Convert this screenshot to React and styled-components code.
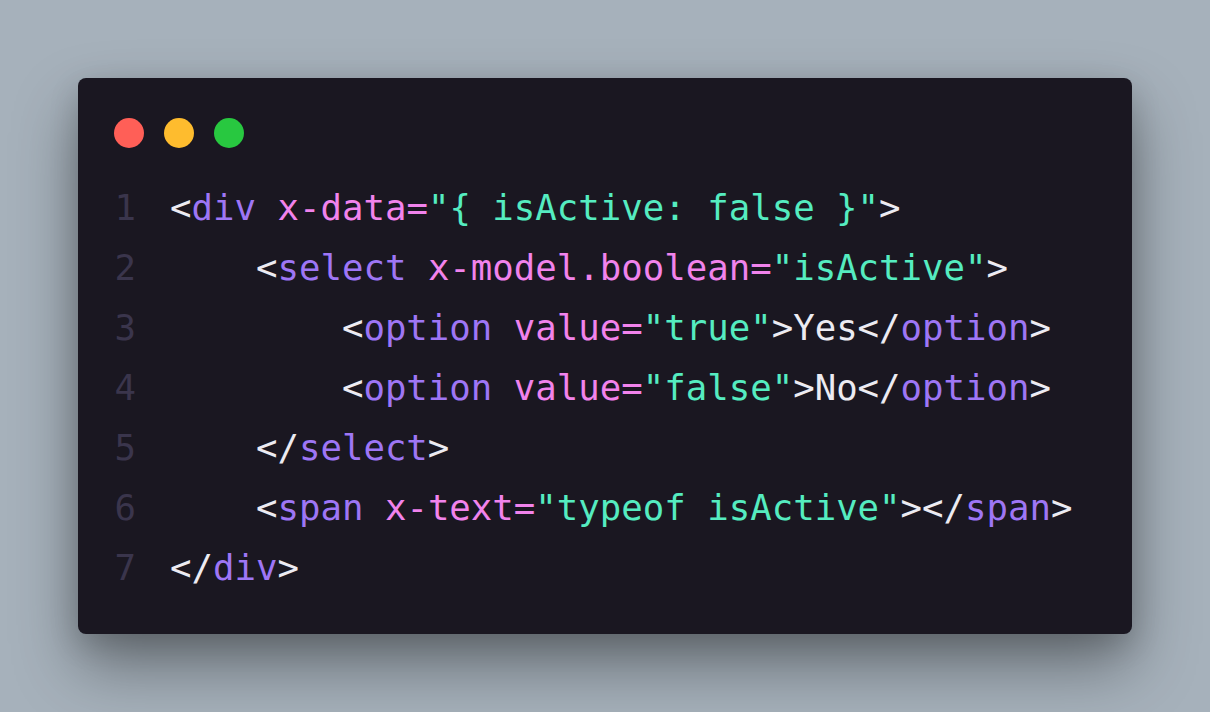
import React from "react";
import styled, { createGlobalStyle } from "styled-components";

const GlobalStyle = createGlobalStyle`
  html, body {
    margin: 0;
    padding: 0;
  }
  body {
    background: #a6b1bb;
  }
`;

const lines = [
  [["t", "<"], ["n", "div"], ["p", " "], ["a", "x-data"], ["a", "="], ["s", "\"{ isActive: false }\""], ["t", ">"]],
  [["p", "    "], ["t", "<"], ["n", "select"], ["p", " "], ["a", "x-model.boolean"], ["a", "="], ["s", "\"isActive\""], ["t", ">"]],
  [["p", "        "], ["t", "<"], ["n", "option"], ["p", " "], ["a", "value"], ["a", "="], ["s", "\"true\""], ["t", ">Yes</"], ["n", "option"], ["t", ">"]],
  [["p", "        "], ["t", "<"], ["n", "option"], ["p", " "], ["a", "value"], ["a", "="], ["s", "\"false\""], ["t", ">No</"], ["n", "option"], ["t", ">"]],
  [["p", "    "], ["t", "</"], ["n", "select"], ["t", ">"]],
  [["p", "    "], ["t", "<"], ["n", "span"], ["p", " "], ["a", "x-text"], ["a", "="], ["s", "\"typeof isActive\""], ["t", "></"], ["n", "span"], ["t", ">"]],
  [["t", "</"], ["n", "div"], ["t", ">"]],
];

const App = () => {
  return (
    <Page>
      <GlobalStyle />
      <Window>
        <Controls>
          <Dot color="#ff5f57" />
          <Dot color="#febc2e" />
          <Dot color="#28c840" />
        </Controls>
        <Code>
          {lines.map((tokens, i) => (
            <Line key={i}>
              <LineNo>{i + 1}</LineNo>
              <Text>
                {tokens.map(([kind, value], j) => (
                  <Token key={j} kind={kind}>
                    {value}
                  </Token>
                ))}
              </Text>
            </Line>
          ))}
        </Code>
      </Window>
    </Page>
  );
};

export default App;

const tokenColors = {
  t: "#ecebf2",
  n: "#9e76f5",
  a: "#f183ec",
  s: "#55ecc0",
  p: "#ecebf2",
};

const Page = styled.div`
  width: 1210px;
  height: 712px;
  display: flex;
  align-items: center;
  justify-content: center;
  background: #a6b1bb;
  overflow: hidden;
`;

const Window = styled.div`
  width: 1054px;
  height: 556px;
  box-sizing: border-box;
  background: #1a1721;
  border-radius: 8px;
  padding: 40px 36px 36px 36px;
  display: flex;
  flex-direction: column;
  box-shadow: 0 32px 64px rgba(0, 0, 0, 0.38), 0 10px 30px rgba(0, 0, 0, 0.15);
`;

const Controls = styled.div`
  display: flex;
  gap: 20px;
  height: 30px;
`;

const Dot = styled.span`
  width: 30px;
  height: 30px;
  border-radius: 50%;
  background: ${(p) => p.color};
`;

const Code = styled.div`
  margin-top: 30px;
  display: flex;
  flex-direction: column;
  font-family: "DejaVu Sans Mono", "Liberation Mono", monospace;
  font-size: 35.7px;
`;

const Line = styled.div`
  display: flex;
  height: 60px;
  line-height: 60px;
  white-space: pre;
`;

const LineNo = styled.span`
  width: 22px;
  margin-right: 34px;
  color: #3a354c;
  text-align: right;
`;

const Text = styled.span``;

const Token = styled.span`
  color: ${(p) => tokenColors[p.kind]};
`;
